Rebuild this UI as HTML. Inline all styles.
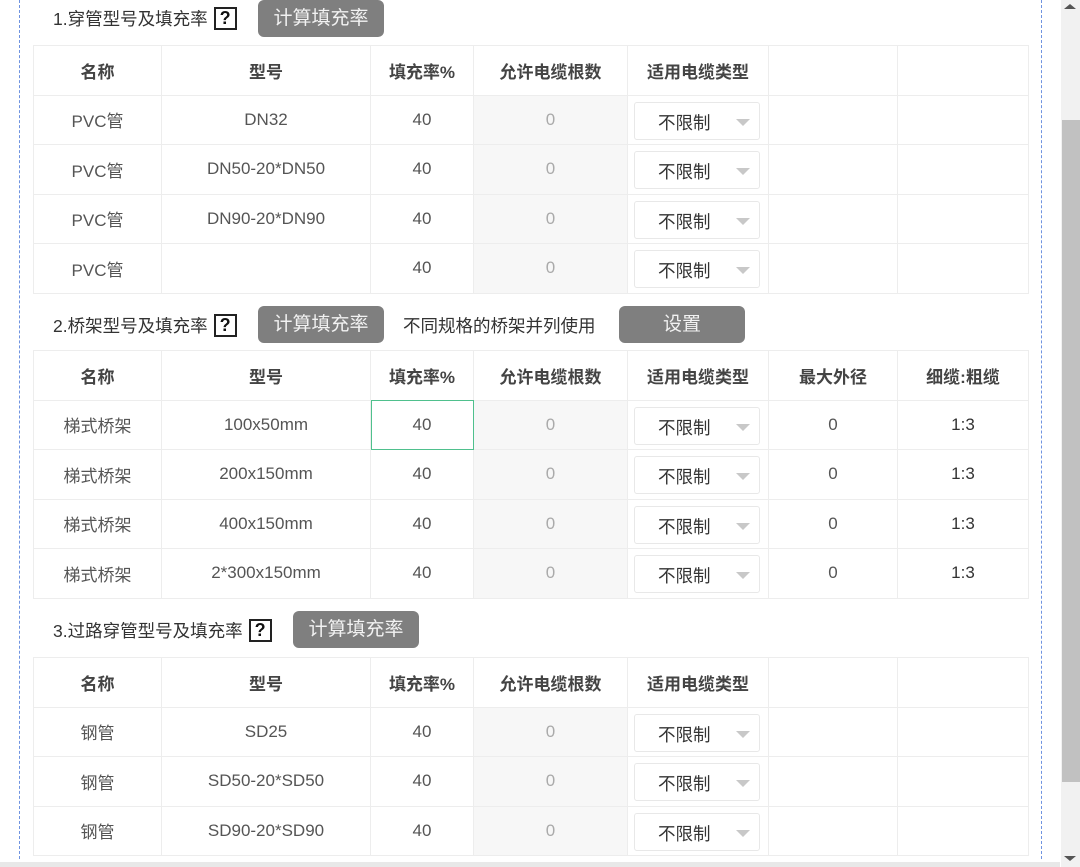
<!DOCTYPE html>
<html><head><meta charset="utf-8">
<style>
*{margin:0;padding:0;box-sizing:border-box}
body{width:1080px;height:867px;overflow:hidden;background:#fff;font-family:"Liberation Sans","Noto Sans CJK SC",sans-serif;color:#333;position:relative}
.dl{position:absolute;top:0;bottom:8px;width:0;border-left:1px dashed #6f93e0}
.sb{position:absolute;left:1061px;top:0;width:19px;height:867px;background:#f1f1f1}
.thumb{position:absolute;left:1062px;top:120px;width:18px;height:662px;background:#c1c1c1}
.title{position:absolute;font-size:17.5px;color:#333;display:flex;align-items:center;height:36px;white-space:nowrap}
.q{display:inline-block;width:23px;height:23px;border:2px solid #222;font-weight:bold;font-size:18px;line-height:19px;text-align:center;margin-left:6px;color:#111}
.btn{position:absolute;height:37px;width:126px;background:#7f7f7f;border-radius:6px;color:#f2f2f2;font-size:19px;text-align:center;line-height:37px}
table{position:absolute;left:33px;border-collapse:collapse;table-layout:fixed;width:995px}
td{border:1px solid #ededed;text-align:center;font-size:17px;color:#555;height:49.5px;padding:0;position:relative}
tr.h td{font-weight:bold;color:#444;font-size:17px}
td.g{background:#f7f7f7;color:#aaa}
.sel{position:absolute;left:6px;top:6px;width:126px;height:38px;border:1px solid #e8e8e8;border-radius:3px;text-align:left;padding-left:23px;line-height:40px;color:#333;font-size:17.5px;background:#fff}
.sel:after{content:"";position:absolute;left:101px;top:16px;border-left:7px solid transparent;border-right:7px solid transparent;border-top:7px solid #c8c8c8}
.bot{position:absolute;left:0;top:862px;width:1060px;height:5px;background:#e8e8e8}
</style></head><body>
<div class="dl" style="left:19px"></div>
<div class="dl" style="left:1041px"></div>
<div class="sb"></div><div class="thumb"></div>
<div style="position:absolute;left:1064px;top:4px;border-left:6px solid transparent;border-right:6px solid transparent;border-bottom:5px solid #555"></div>
<div style="position:absolute;left:1064px;top:856px;border-left:6px solid transparent;border-right:6px solid transparent;border-top:5px solid #555"></div>

<div class="title" style="left:53px;top:0">1.穿管型号及填充率<span class="q">?</span></div>
<div class="btn" style="left:258px;top:0">计算填充率</div>
<table style="top:45px">
<colgroup><col style="width:128px"><col style="width:209px"><col style="width:103px"><col style="width:154px"><col style="width:141px"><col style="width:129px"><col style="width:131px"></colgroup>
<tr class="h"><td>名称</td><td>型号</td><td>填充率%</td><td>允许电缆根数</td><td>适用电缆类型</td><td></td><td></td></tr>
<tr><td>PVC管</td><td>DN32</td><td>40</td><td class="g">0</td><td><div class="sel">不限制</div></td><td></td><td></td></tr>
<tr><td>PVC管</td><td>DN50-20*DN50</td><td>40</td><td class="g">0</td><td><div class="sel">不限制</div></td><td></td><td></td></tr>
<tr><td>PVC管</td><td>DN90-20*DN90</td><td>40</td><td class="g">0</td><td><div class="sel">不限制</div></td><td></td><td></td></tr>
<tr><td>PVC管</td><td></td><td>40</td><td class="g">0</td><td><div class="sel">不限制</div></td><td></td><td></td></tr>
</table>

<div class="title" style="left:53px;top:307px">2.桥架型号及填充率<span class="q">?</span></div>
<div class="btn" style="left:258px;top:306px">计算填充率</div>
<div class="title" style="left:403px;top:307px">不同规格的桥架并列使用</div>
<div class="btn" style="left:619px;top:306px">设置</div>
<table style="top:350px">
<colgroup><col style="width:128px"><col style="width:209px"><col style="width:103px"><col style="width:154px"><col style="width:141px"><col style="width:129px"><col style="width:131px"></colgroup>
<tr class="h"><td>名称</td><td>型号</td><td>填充率%</td><td>允许电缆根数</td><td>适用电缆类型</td><td>最大外径</td><td>细缆:粗缆</td></tr>
<tr><td>梯式桥架</td><td>100x50mm</td><td style="outline:1px solid #4fc08d;outline-offset:-1px">40</td><td class="g">0</td><td><div class="sel">不限制</div></td><td>0</td><td style="color:#333">1:3</td></tr>
<tr><td>梯式桥架</td><td>200x150mm</td><td>40</td><td class="g">0</td><td><div class="sel">不限制</div></td><td>0</td><td style="color:#333">1:3</td></tr>
<tr><td>梯式桥架</td><td>400x150mm</td><td>40</td><td class="g">0</td><td><div class="sel">不限制</div></td><td>0</td><td style="color:#333">1:3</td></tr>
<tr><td>梯式桥架</td><td>2*300x150mm</td><td>40</td><td class="g">0</td><td><div class="sel">不限制</div></td><td>0</td><td style="color:#333">1:3</td></tr>
</table>

<div class="title" style="left:53px;top:612px">3.过路穿管型号及填充率<span class="q">?</span></div>
<div class="btn" style="left:293px;top:611px">计算填充率</div>
<table style="top:657px">
<colgroup><col style="width:128px"><col style="width:209px"><col style="width:103px"><col style="width:154px"><col style="width:141px"><col style="width:129px"><col style="width:131px"></colgroup>
<tr class="h"><td>名称</td><td>型号</td><td>填充率%</td><td>允许电缆根数</td><td>适用电缆类型</td><td></td><td></td></tr>
<tr><td>钢管</td><td>SD25</td><td>40</td><td class="g">0</td><td><div class="sel">不限制</div></td><td></td><td></td></tr>
<tr><td>钢管</td><td>SD50-20*SD50</td><td>40</td><td class="g">0</td><td><div class="sel">不限制</div></td><td></td><td></td></tr>
<tr><td>钢管</td><td>SD90-20*SD90</td><td>40</td><td class="g">0</td><td><div class="sel">不限制</div></td><td></td><td></td></tr>
</table>
<div class="bot"></div>
</body></html>
